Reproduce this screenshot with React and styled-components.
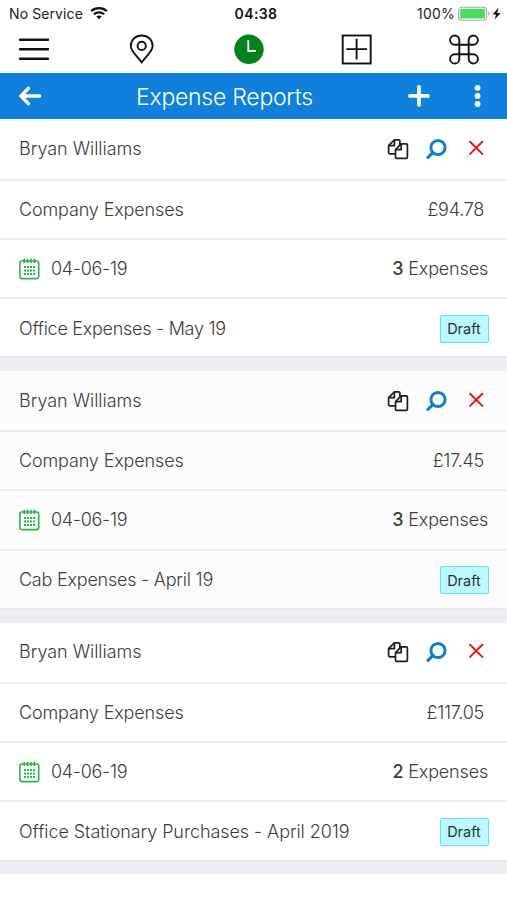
import { createGlobalStyle, styled } from "styled-components";

const reports = [
  { id: 1, amount: "£94.78", count: 3, title: "Office Expenses - May 19", spacing: "-0.28px" },
  { id: 2, amount: "£17.45", count: 3, title: "Cab Expenses - April 19", spacing: "-0.23px", tint: "#fcfcfd" },
  { id: 3, amount: "£117.05", count: 2, title: "Office Stationary Purchases - April 2019", spacing: "-0.08px" },
];

export default function App() {
  return (
    <Screen>
      <GlobalStyle />
      <StatusBar />
      <TabBar />
      <Header />
      {reports.map((report) => (
        <ReportCard key={report.id} report={report} />
      ))}
    </Screen>
  );
}

function StatusBar() {
  return (
    <StatusWrapper>
      <Carrier>
        <span>No Service</span>
        <svg width="18" height="13" viewBox="0 0 18 13" fill="none" stroke="#111">
          <path d="M1.2 4.2C5.6 0.2 12.4 0.2 16.8 4.2" strokeWidth="2.3" />
          <path d="M3.9 7.3C6.8 4.7 11.2 4.7 14.1 7.3" strokeWidth="2.2" />
          <path d="M9 12.2L6.3 9.4C7.8 8.1 10.2 8.1 11.7 9.4Z" fill="#111" stroke="none" />
        </svg>
      </Carrier>
      <Time>04:38</Time>
      <Battery>
        <span>100%</span>
        <svg width="47" height="16" viewBox="0 0 47 16">
          <rect x="2.6" y="1.2" width="28" height="13" rx="3" fill="#fff" stroke="#a9aaaa" strokeWidth="1.1" />
          <rect x="4.2" y="2.8" width="24.8" height="9.8" rx="1.2" fill="#4cd964" />
          <path d="M32 5.4C33.8 5.8 33.8 9.4 32 9.8Z" fill="#a9aaaa" />
          <path d="M42.6 1.6L36.6 8.4H40.1L38.6 13.6L44.8 6.9H41.1Z" fill="#111" />
        </svg>
      </Battery>
    </StatusWrapper>
  );
}

function TabBar() {
  return (
    <Tabs>
      <Tab aria-label="Menu">
        <svg width="32" height="32" viewBox="0 0 32 32" stroke="#111" strokeWidth="2.4" strokeLinecap="round">
          <path d="M2 6.8H30M2 16.3H30M2 25.8H30" />
        </svg>
      </Tab>
      <Tab aria-label="Location">
        <svg width="32" height="32" viewBox="0 0 32 32" fill="none" stroke="#111" strokeWidth="1.9" strokeLinejoin="round">
          <path d="M15.7 29.5C12.2 23.8 4.8 18.9 4.8 13C4.8 6.8 9.6 2.5 15.7 2.5S26.6 6.8 26.6 13C26.6 18.9 19.2 23.8 15.7 29.5Z" />
          <circle cx="15.7" cy="12.9" r="4.1" />
        </svg>
      </Tab>
      <Tab aria-label="Timesheets">
        <svg width="32" height="32" viewBox="0 0 32 32" fill="none">
          <circle cx="16" cy="16.3" r="14.7" fill="#07811b" />
          <path d="M15.3 7.3V18H23" stroke="#fff" strokeWidth="1.8" />
        </svg>
      </Tab>
      <Tab aria-label="Add">
        <svg width="32" height="32" viewBox="0 0 32 32" fill="none" stroke="#111" strokeWidth="1.9">
          <rect x="1.7" y="2.5" width="28" height="28" />
          <path d="M15.6 5.8V26.5M5.3 16.1H26" />
        </svg>
      </Tab>
      <Tab aria-label="Shortcuts">
        <svg width="32" height="32" viewBox="0 0 32 32" fill="none" stroke="#111" strokeWidth="1.9">
          <path d="M11.3 11.5V7.1A4.6 4.6 0 1 0 6.7 11.7H25.3A4.6 4.6 0 1 0 20.7 7.1V25.9A4.6 4.6 0 1 0 25.3 21.3H6.7A4.6 4.6 0 1 0 11.3 25.9Z" />
        </svg>
      </Tab>
    </Tabs>
  );
}

function Header() {
  return (
    <HeaderWrapper>
      <HeaderButton aria-label="Back">
        <svg width="24" height="20" viewBox="0 0 24 20" fill="none" stroke="#fff" strokeWidth="3.4" strokeLinecap="round" strokeLinejoin="round">
          <path d="M10.3 2.4L3 10L10.3 17.6M3.4 10H21.6" />
        </svg>
      </HeaderButton>
      <Title>Expense Reports</Title>
      <HeaderActions>
        <HeaderButton aria-label="New report">
          <svg width="24" height="24" viewBox="0 0 24 24" stroke="#fff" strokeWidth="3.8" strokeLinecap="round">
            <path d="M12 3V20.8M3 11.9H20.9" />
          </svg>
        </HeaderButton>
        <HeaderButton aria-label="More">
          <svg width="8" height="24" viewBox="0 0 8 24" fill="#fff">
            <circle cx="3.6" cy="3.8" r="2.9" />
            <circle cx="3.6" cy="11.9" r="2.9" />
            <circle cx="3.6" cy="20" r="2.9" />
          </svg>
        </HeaderButton>
      </HeaderActions>
    </HeaderWrapper>
  );
}

function ReportCard({ report }) {
  return (
    <Card $tint={report.tint}>
      <Row $height={61.5}>
        <Label $spacing="-0.03px">Bryan Williams</Label>
        <RowActions>
          <CopyIcon />
          <SearchIcon />
          <CloseIcon />
        </RowActions>
      </Row>
      <Row $height={58.8} $inset={4} $drop={1}>
        <Label $spacing="-0.14px">Company Expenses</Label>
        <Label $spacing="-0.26px">{report.amount}</Label>
      </Row>
      <Row $height={59.6} $drop={0.6}>
        <DateGroup>
          <CalendarIcon />
          <Label $spacing="-0.3px">04-06-19</Label>
        </DateGroup>
        <Label $spacing="-0.18px">
          <strong>{report.count}</strong> Expenses
        </Label>
      </Row>
      <Row $height={58.2} $inset={-1} $drop={1.5} $last>
        <Label $spacing={report.spacing}>{report.title}</Label>
        <Badge>Draft</Badge>
      </Row>
      <Divider />
    </Card>
  );
}

const CopyIcon = () => (
  <svg width="22" height="22" viewBox="0 0 22 22" fill="#fff" stroke="#1c1c1c" strokeWidth="1.7" strokeLinejoin="round">
    <path d="M7.4 1.8H11.6Q12.9 1.8 12.9 3.1V15.9H2.9Q1.6 15.9 1.6 14.6V7.6Z" />
    <path d="M7.4 1.8V7.6H1.6" fill="none" />
    <path d="M14.2 5.9H19.2Q20.4 5.9 20.4 7.1V19.2Q20.4 20.4 19.2 20.4H9.7Q8.5 20.4 8.5 19.2V11.6Z" />
    <path d="M14.2 5.9V11.6H8.5" fill="none" />
  </svg>
);

const SearchIcon = () => (
  <svg width="22" height="22" viewBox="0 0 22 22" fill="none" stroke="#0d7fd6">
    <circle cx="12" cy="9.5" r="7.1" strokeWidth="3" />
    <path d="M6.9 14.7L2 19.4" strokeWidth="3.2" strokeLinecap="round" />
  </svg>
);

const CloseIcon = () => (
  <svg width="22" height="22" viewBox="0 0 22 22" stroke="#f01414" strokeWidth="2" strokeLinecap="round">
    <path d="M5.1 3.7L17.3 15.9M17.3 3.7L5.1 15.9" />
  </svg>
);

const CalendarIcon = () => (
  <svg width="22" height="22" viewBox="0 0 22 22" fill="none" stroke="#2fb24c">
    <rect x="0.9" y="3" width="18.8" height="17.6" rx="2" strokeWidth="1.6" />
    <path d="M5.2 0.8V5M8.5 0.8V5M12 0.8V5M15.4 0.8V5" strokeWidth="1.7" />
    <path d="M5 9H16M5 12.5H16M5 16H16" strokeWidth="2" strokeDasharray="2 1" />
  </svg>
);

const GlobalStyle = createGlobalStyle`
  * {
    box-sizing: border-box;
  }

  body {
    margin: 0;
    background: #fff;
    font-family: Inter, "Liberation Sans", sans-serif;
  }

  button {
    padding: 0;
    border: 0;
    background: none;
  }

  svg {
    display: block;
    flex-shrink: 0;
  }
`;

const Screen = styled.main`
  width: 100%;
  min-height: 900px;
  overflow: hidden;
`;

const StatusWrapper = styled.div`
  display: grid;
  grid-template-columns: 1fr auto 1fr;
  align-items: center;
  height: 27px;
  padding: 0 4px 0 9px;
  font-size: 14px;
  color: #222;
`;

const Carrier = styled.div`
  display: flex;
  align-items: center;
  gap: 7px;
  letter-spacing: 0.1px;
`;

const Time = styled.span`
  font-weight: 600;
  letter-spacing: 0.4px;
  color: #111;
`;

const Battery = styled.div`
  display: flex;
  align-items: center;
  justify-content: flex-end;
  gap: 1px;
  letter-spacing: 0.2px;
`;

const Tabs = styled.nav`
  display: flex;
  align-items: center;
  justify-content: space-between;
  height: 46px;
  padding: 0 27px 2px 18px;
`;

const Tab = styled.button`
  width: 32px;
  height: 32px;
`;

const HeaderWrapper = styled.header`
  display: flex;
  align-items: center;
  height: 46.4px;
  padding: 0.6px 25px 0 18px;
  background: #0f80dc;
`;

const HeaderButton = styled.button`
  display: flex;
`;

const Title = styled.h1`
  flex: 1;
  margin: 0;
  padding: 1px 0 0 94px;
  font-size: 23px;
  font-weight: 300;
  line-height: 28px;
  letter-spacing: -0.25px;
  color: #fff;
  white-space: nowrap;
`;

const HeaderActions = styled.div`
  display: flex;
  gap: 43px;
`;

const Card = styled.section`
  background: ${({ $tint }) => $tint || "#fff"};
`;

const Divider = styled.div`
  height: 13.5px;
  background: #edecf3;
`;

const Row = styled.div`
  display: flex;
  align-items: center;
  justify-content: space-between;
  height: ${({ $height }) => $height}px;
  padding: ${({ $drop = 0 }) => $drop}px ${({ $inset = 0 }) => 19 + $inset}px 0 19px;
  border-bottom: ${({ $last }) => ($last ? "1px solid #e6e6ea" : "2px solid #ebecee")};
`;

const Label = styled.span`
  font-size: 18px;
  font-weight: 300;
  line-height: 22px;
  letter-spacing: ${({ $spacing = "0" }) => $spacing};
  color: #3c3c3c;
  white-space: nowrap;

  strong {
    font-weight: 500;
  }
`;

const RowActions = styled.div`
  display: flex;
  gap: 17px;
  padding-right: 1px;
`;

const DateGroup = styled.div`
  display: flex;
  align-items: center;
  gap: 10px;
`;

const Badge = styled.span`
  display: flex;
  align-items: center;
  justify-content: center;
  width: 49px;
  height: 28px;
  padding-right: 1px;
  border: 1.5px solid #5fe3f0;
  border-radius: 2px;
  background: #bdf8ff;
  font-size: 14.5px;
  color: #263238;
`;
